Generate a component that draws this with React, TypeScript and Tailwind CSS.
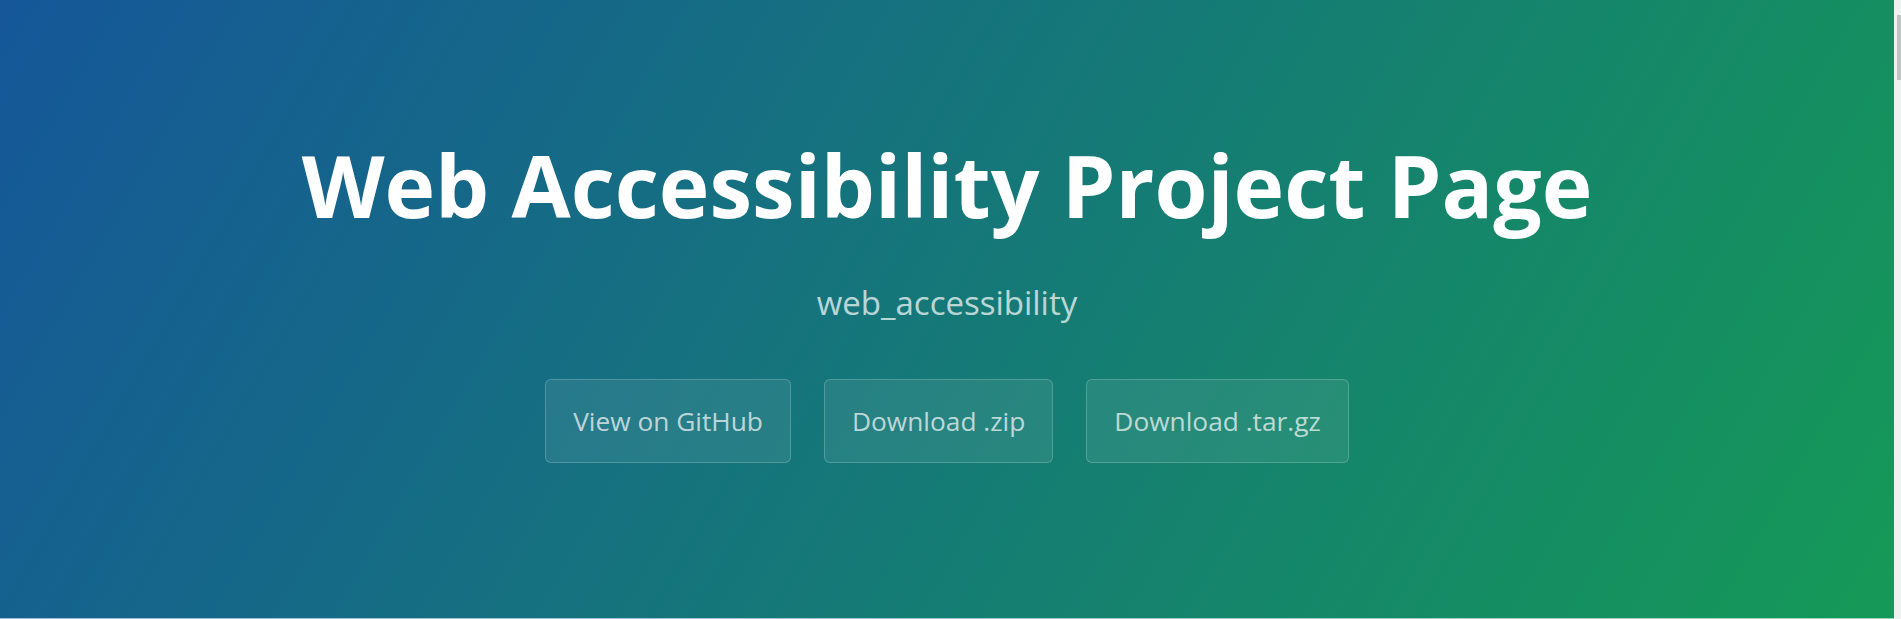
import React from 'react';

const links = ['View on GitHub', 'Download .zip', 'Download .tar.gz'];

export default function App() {
  return (
    <div className="flex h-[619px] overflow-hidden bg-white font-['Open_Sans',sans-serif]">
      <div className="flex-1">
        <header className="flex h-[619px] flex-col items-center border-b border-solid border-white/60 bg-[#159957] bg-[linear-gradient(120deg,#155799,#159957)] pt-[134px] text-center text-white">
          <h1 className="text-[85.7px] leading-[1.2] font-bold">Web Accessibility Project Page</h1>
          <h2 className="mt-[41px] text-[33px] leading-[1.5] font-normal opacity-70">web_accessibility</h2>
          <div className="mt-[52px] flex gap-[33px]">
            {links.map((label) => (
              <a
                key={label}
                href="#"
                className="rounded-[6px] border border-solid border-white/20 bg-white/[0.08] px-[27px] py-[20px] text-[26.3px] leading-[1.6] text-white/70"
              >
                {label}
              </a>
            ))}
          </div>
        </header>
      </div>
      {/* scrollbar */}
      <aside className="flex w-[7px] shrink-0 justify-end bg-[#f1f1f1]">
        <div className="mt-[15px] h-[65px] w-[4px] bg-[#c1c1c1]" />
      </aside>
    </div>
  );
}
